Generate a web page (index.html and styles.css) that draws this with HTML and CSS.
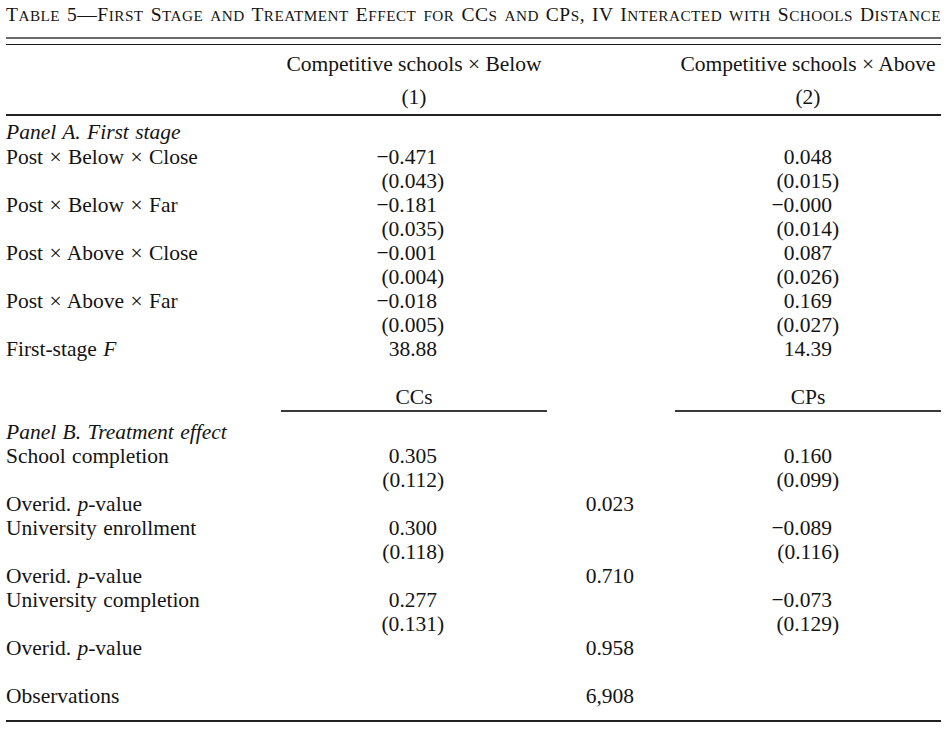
FILE: index.html
```html
<!DOCTYPE html>
<html lang="en">
<head>
<meta charset="utf-8">
<title>Table 5</title>
<link rel="stylesheet" href="styles.css">
</head>
<body>
<div class="page">
  <h1 class="title">T<span class="sc">able</span> 5—F<span class="sc">irst</span> S<span class="sc">tage</span> <span class="sc">and</span> T<span class="sc">reatment</span> E<span class="sc">ffect</span> <span class="sc">for</span> CC<span class="sc">s</span> <span class="sc">and</span> CP<span class="sc">s</span>, IV I<span class="sc">nteracted</span> <span class="sc">with</span> S<span class="sc">chools</span> D<span class="sc">istance</span></h1>
  <div class="rule-top"></div>
  <div class="rule-top2"></div>

  <div class="row head1">
    <div class="lab"></div>
    <div class="hc">Competitive schools × Below</div>
    <div class="mid"></div>
    <div class="hc">Competitive schools × Above</div>
  </div>
  <div class="row head2">
    <div class="lab"></div>
    <div class="hc">(1)</div>
    <div class="mid"></div>
    <div class="hc">(2)</div>
  </div>
  <div class="rule-mid"></div>

  <div class="row panel-a"><div class="lab"><i>Panel A. First stage</i></div></div>
  <div class="row"><div class="lab">Post × Below × Close</div><div class="num">−0.471</div><div class="mid"></div><div class="num">0.048</div></div>
  <div class="row"><div class="lab"></div><div class="num">(0.043<span class="rp">)</span></div><div class="mid"></div><div class="num">(0.015<span class="rp">)</span></div></div>
  <div class="row"><div class="lab">Post × Below × Far</div><div class="num">−0.181</div><div class="mid"></div><div class="num">−0.000</div></div>
  <div class="row"><div class="lab"></div><div class="num">(0.035<span class="rp">)</span></div><div class="mid"></div><div class="num">(0.014<span class="rp">)</span></div></div>
  <div class="row"><div class="lab">Post × Above × Close</div><div class="num">−0.001</div><div class="mid"></div><div class="num">0.087</div></div>
  <div class="row"><div class="lab"></div><div class="num">(0.004<span class="rp">)</span></div><div class="mid"></div><div class="num">(0.026<span class="rp">)</span></div></div>
  <div class="row"><div class="lab">Post × Above × Far</div><div class="num">−0.018</div><div class="mid"></div><div class="num">0.169</div></div>
  <div class="row"><div class="lab"></div><div class="num">(0.005<span class="rp">)</span></div><div class="mid"></div><div class="num">(0.027<span class="rp">)</span></div></div>
  <div class="row"><div class="lab">First-stage <i>F</i></div><div class="num">38.88</div><div class="mid"></div><div class="num">14.39</div></div>
  <div class="row"><div class="lab">&nbsp;</div></div>

  <div class="row sub">
    <div class="lab"></div>
    <div class="hc ul">CCs</div>
    <div class="mid"></div>
    <div class="hc ul">CPs</div>
  </div>

  <div class="row panel-b"><div class="lab"><i>Panel B. Treatment effect</i></div></div>
  <div class="row"><div class="lab">School completion</div><div class="num">0.305</div><div class="mid"></div><div class="num">0.160</div></div>
  <div class="row"><div class="lab"></div><div class="num">(0.112<span class="rp">)</span></div><div class="mid"></div><div class="num">(0.099<span class="rp">)</span></div></div>
  <div class="row"><div class="lab">Overid. <i>p</i>-value</div><div class="num"></div><div class="mid num">0.023</div><div class="num"></div></div>
  <div class="row"><div class="lab">University enrollment</div><div class="num">0.300</div><div class="mid"></div><div class="num">−0.089</div></div>
  <div class="row"><div class="lab"></div><div class="num">(0.118<span class="rp">)</span></div><div class="mid"></div><div class="num">(0.116<span class="rp">)</span></div></div>
  <div class="row"><div class="lab">Overid. <i>p</i>-value</div><div class="num"></div><div class="mid num">0.710</div><div class="num"></div></div>
  <div class="row"><div class="lab">University completion</div><div class="num">0.277</div><div class="mid"></div><div class="num">−0.073</div></div>
  <div class="row"><div class="lab"></div><div class="num">(0.131<span class="rp">)</span></div><div class="mid"></div><div class="num">(0.129<span class="rp">)</span></div></div>
  <div class="row"><div class="lab">Overid. <i>p</i>-value</div><div class="num"></div><div class="mid num">0.958</div><div class="num"></div></div>
  <div class="row"><div class="lab">&nbsp;</div></div>
  <div class="row"><div class="lab">Observations</div><div class="num"></div><div class="mid num">6,908</div><div class="num"></div></div>
  <div class="rule-bottom"></div>
</div>
</body>
</html>
```

FILE: styles.css
```css
html, body {
  margin: 0;
  padding: 0;
  background: #ffffff;
}

body {
  font-family: "Liberation Serif", "Times New Roman", serif;
  color: #141414;
}

.page {
  width: 935px;
  padding: 0 0 0 6px;
}

.title {
  margin: 0;
  padding-top: 3px;
  height: 33px;
  font-size: 19.5px;
  line-height: 24px;
  font-weight: normal;
  white-space: nowrap;
  letter-spacing: 0.5px;
  text-align: justify;
  text-align-last: justify;
  color: #141414;
}

.sc {
  font-size: 0.78em;
  text-transform: uppercase;
}

.rule-top {
  height: 2px;
  background: #6a6a6a;
  margin-top: 1px;
}

.rule-top2 {
  height: 1px;
  background: #1a1a1a;
  margin-top: 5px;
}

.rule-mid {
  height: 2px;
  background: #222222;
  margin-top: 5px;
}

.rule-bottom {
  height: 2px;
  background: #222222;
  margin-top: 12px;
}

.row {
  display: grid;
  grid-template-columns: 275px 266px 128px 266px;
  font-size: 21.5px;
  line-height: 24px;
  height: 24px;
  white-space: nowrap;
}

.head1 {
  margin-top: 7px;
}

.head2 {
  margin-top: 9px;
}

.panel-a {
  margin-top: 4px;
  height: 25px;
}

.lab {
  word-spacing: 1px;
}

.hc {
  text-align: center;
}

.num {
  text-align: right;
  padding-right: 110px;
}

.mid.num {
  padding-right: 41px;
}

.row > .num:last-child {
  padding-right: 109px;
}

.rp {
  margin-right: -0.333em;
}

.sub {
  height: 27px;
}

.ul {
  border-bottom: 2px solid #3a3a3a;
  height: 25px;
}

.panel-b {
  margin-top: 8px;
}
```
